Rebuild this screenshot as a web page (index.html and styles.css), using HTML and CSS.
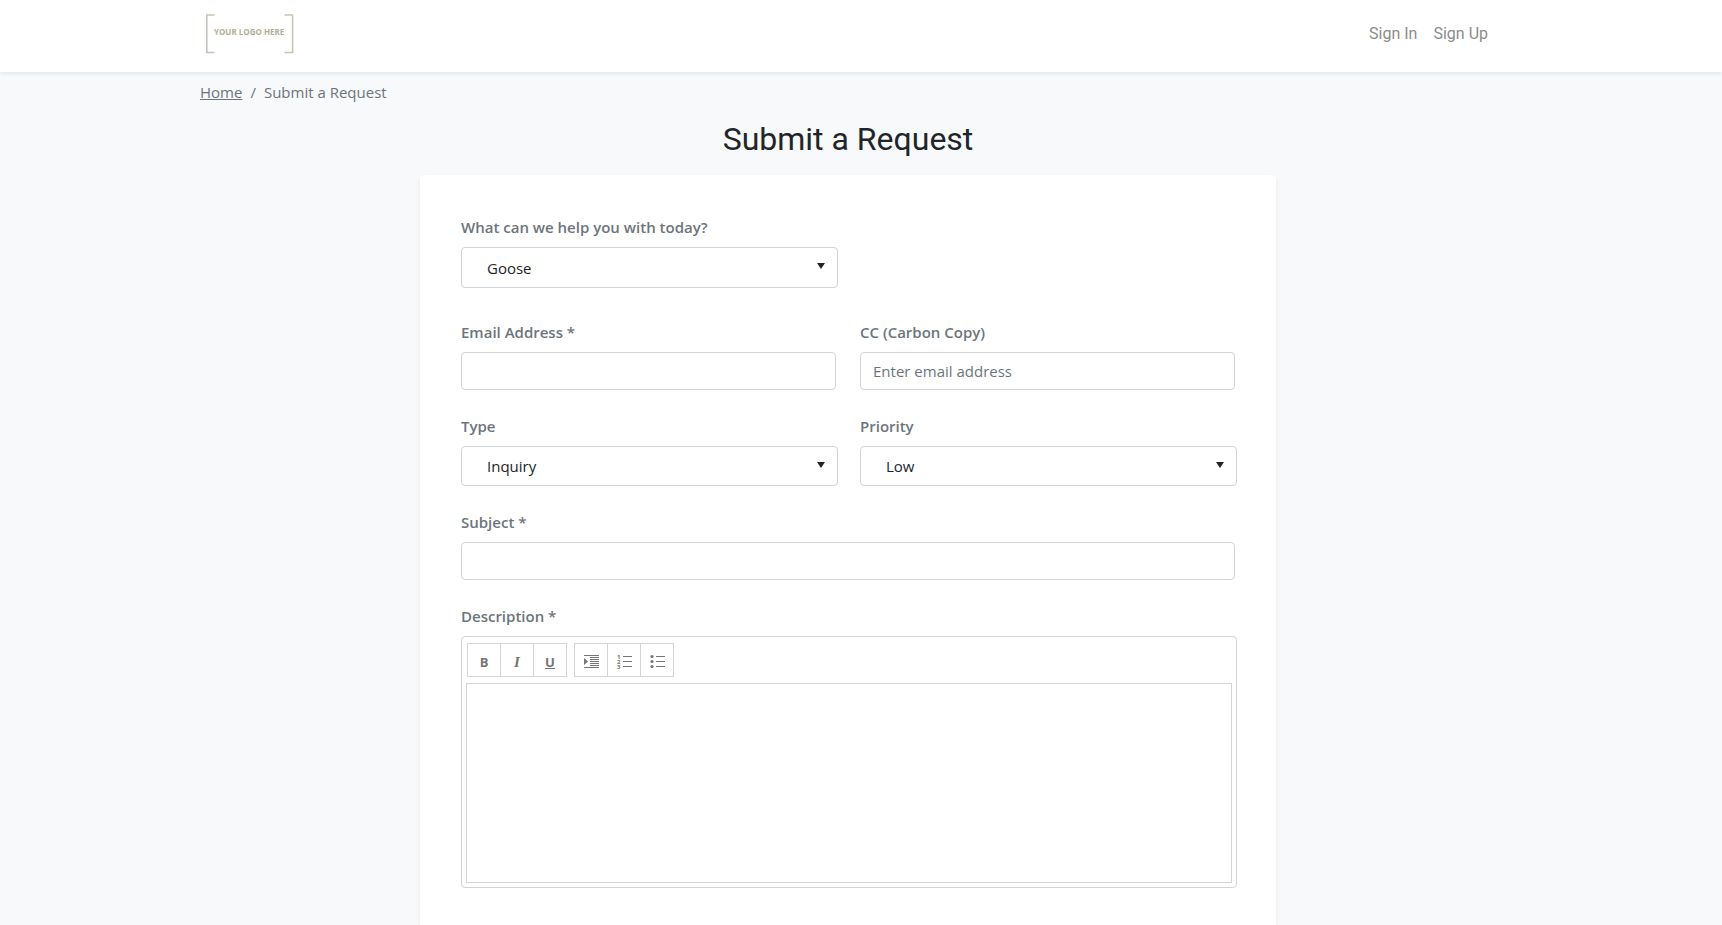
FILE: index.html
```html
<!DOCTYPE html>
<html lang="en">
<head>
<meta charset="utf-8">
<meta name="viewport" content="width=device-width, initial-scale=1">
<title>Submit a Request</title>
<link rel="stylesheet" href="styles.css">
</head>
<body>
<header class="site-header">
  <div class="container header-inner">
    <a class="logo" href="#" aria-label="Your logo here">
      <svg width="100" height="50" viewBox="0 0 100 50" aria-hidden="true">
        <path d="M14.5 7H6.8V44.5H14.5M84.5 7H92.6V44.5H84.5" fill="none" stroke="#c9c4b4" stroke-width="1.6"/>
        <text class="logo-text" x="14" y="27">YOUR LOGO HERE</text>
      </svg>
    </a>
    <nav class="account-nav">
      <a class="nav-link" href="#">Sign In</a>
      <a class="nav-link" href="#">Sign Up</a>
    </nav>
  </div>
</header>
<main class="page">
  <div class="container page-inner">
    <nav class="breadcrumb" aria-label="Breadcrumb">
      <a class="breadcrumb-link" href="#">Home</a>
      <span>/</span>
      <span>Submit a Request</span>
    </nav>
    <h1 class="title">Submit a Request</h1>
    <form class="card">
      <div class="row row-first">
        <div class="field">
          <label class="label" for="topic">What can we help you with today?</label>
          <div class="select-wrap"><select class="select select-tall" id="topic"><option>Goose</option></select></div>
        </div>
      </div>
      <div class="row">
        <div class="field">
          <label class="label" for="email">Email Address *</label>
          <input class="input" id="email" type="email">
        </div>
        <div class="field">
          <label class="label" for="cc">CC (Carbon Copy)</label>
          <input class="input" id="cc" type="text" placeholder="Enter email address">
        </div>
      </div>
      <div class="row">
        <div class="field">
          <label class="label" for="type">Type</label>
          <div class="select-wrap"><select class="select" id="type"><option>Inquiry</option></select></div>
        </div>
        <div class="field">
          <label class="label" for="priority">Priority</label>
          <div class="select-wrap"><select class="select" id="priority"><option>Low</option></select></div>
        </div>
      </div>
      <div class="field">
        <label class="label" for="subject">Subject *</label>
        <input class="input" id="subject" type="text">
      </div>
      <div class="field">
        <label class="label" for="description">Description *</label>
        <div class="editor">
          <div class="toolbar">
            <div class="tool-group">
              <button class="tool" type="button" aria-label="Bold"><span class="tool-bold">B</span></button>
              <button class="tool" type="button" aria-label="Italic"><span class="tool-italic">I</span></button>
              <button class="tool" type="button" aria-label="Underline"><span class="tool-underline">U</span></button>
            </div>
            <div class="tool-group">
              <button class="tool" type="button" aria-label="Indent">
                <svg class="icon" width="15" height="16" viewBox="0 0 15 16"><path d="M0 1h15v1H0zM6 3h9v1H6zM6 5h9v1H6zM6 7h9v1H6zM6 9h9v1H6zM6 11h9v1H6zM0 13h15v1H0zM0 4l4 3.5L0 11z"/></svg>
              </button>
              <button class="tool" type="button" aria-label="Numbered list">
                <svg class="icon" width="15" height="16" viewBox="0 0 15 16"><path d="M6 2h9v1H6zM6 7h9v1H6zM6 12h9v1H6z"/><text class="icon-digit" x="0" y="5">1</text><text class="icon-digit" x="0" y="10">2</text><text class="icon-digit" x="0" y="15">3</text></svg>
              </button>
              <button class="tool" type="button" aria-label="Bulleted list">
                <svg class="icon" width="15" height="16" viewBox="0 0 15 16"><path d="M6 2h9v1H6zM6 7h9v1H6zM6 12h9v1H6z"/><circle cx="2" cy="2.5" r="1.6"/><circle cx="2" cy="7.5" r="1.6"/><circle cx="2" cy="12.5" r="1.6"/></svg>
              </button>
            </div>
          </div>
          <textarea class="editor-area" id="description"></textarea>
        </div>
      </div>
    </form>
  </div>
</main>
</body>
</html>
```
FILE: styles.css
```css
* { box-sizing: border-box; }

body {
  margin: 0;
  min-height: 100vh;
  display: flex;
  flex-direction: column;
  background: #f7f9fb;
  color: #212529;
  font: 15px/24px "Segoe UI", "Open Sans", sans-serif;
}

.container {
  width: 100%;
  max-width: 1320px;
  margin: 0 auto;
  padding: 0 12px;
}

.site-header {
  padding: 0 26px 0 0;
  background: #fff;
  box-shadow: 0 2px 4px rgba(0, 0, 0, 0.075);
}

.header-inner {
  display: flex;
  justify-content: space-between;
  height: 72px;
  padding-top: 8px;
}

.logo { height: 50px; }
.logo svg { display: block; }

.logo-text {
  font: 700 8px "Open Sans", sans-serif;
  fill: #b3ad97;
}

.account-nav {
  display: flex;
  height: 52px;
  align-items: center;
}

.nav-link {
  padding: 0 8px;
  color: #8c8c8c;
  font: 16px/24px Roboto, sans-serif;
  text-decoration: none;
}

.page {
  flex: 1;
  display: flex;
  padding-right: 26px;
}

.page-inner {
  display: flex;
  flex-direction: column;
}

.breadcrumb {
  display: flex;
  gap: 8px;
  padding-top: 8px;
  color: #6c757d;
}

.breadcrumb-link { color: inherit; }

.title {
  margin: 16px 0;
  font: 400 32px/39px Roboto, sans-serif;
  text-align: center;
}

.card {
  flex: 1;
  display: flex;
  flex-direction: column;
  gap: 24px;
  width: 100%;
  max-width: 856px;
  margin: 0 auto;
  padding: 40px 41px 37px;
  background: #fff;
  border-radius: 4px 4px 0 0;
  box-shadow: 0 2px 4px rgba(0, 0, 0, 0.075);
}

.row {
  display: grid;
  grid-template-columns: 1fr 1fr;
  gap: 24px;
}

.row-first { padding-bottom: 8px; }

.label {
  display: block;
  margin-bottom: 8px;
  color: #6c757d;
  font-weight: 600;
}

.input,
.select {
  display: block;
  width: 100%;
  height: 38px;
  padding: 0 12px;
  border: 1px solid #ced4da;
  border-radius: 4px;
  background: #fff;
  color: #212529;
  font: inherit;
}

.input::placeholder {
  color: #6c757d;
  opacity: 1;
}

.select-wrap {
  position: relative;
  margin-right: -2px;
}

.select-wrap::after {
  content: "";
  position: absolute;
  top: 16px;
  right: 13px;
  width: 8px;
  height: 6px;
  background: #212529;
  clip-path: polygon(0 0, 100% 0, 50% 100%);
  pointer-events: none;
}

.select {
  height: 40px;
  padding-left: 25px;
  appearance: none;
}

.select-tall { height: 41px; }

.editor {
  margin-right: -2px;
  padding: 6px 4px 4px;
  border: 1px solid #ced4da;
  border-radius: 4px;
}

.toolbar {
  display: flex;
  gap: 7px;
  padding: 0 1px 6px;
}

.tool-group {
  display: flex;
  border: 1px solid #d5d5d5;
}

.tool {
  display: flex;
  align-items: center;
  justify-content: center;
  width: 33px;
  height: 32px;
  padding: 4px 0 0;
  border: 0;
  background: #fff;
  color: #757575;
  font: 700 13px/16px "Open Sans", sans-serif;
}

.tool:first-child { width: 32px; }
.tool + .tool { border-left: 1px solid #d5d5d5; }

.tool-italic { font: italic 700 15px/16px "Liberation Serif", serif; }

.tool-underline {
  line-height: 12px;
  border-bottom: 1px solid #757575;
}

.icon { fill: #757575; }

.icon-digit { font: 700 6px "Open Sans", sans-serif; }

.editor-area {
  display: block;
  width: 100%;
  height: 200px;
  border: 1px solid #d5d5d5;
  background: #fff;
  font: inherit;
  resize: none;
}
```
